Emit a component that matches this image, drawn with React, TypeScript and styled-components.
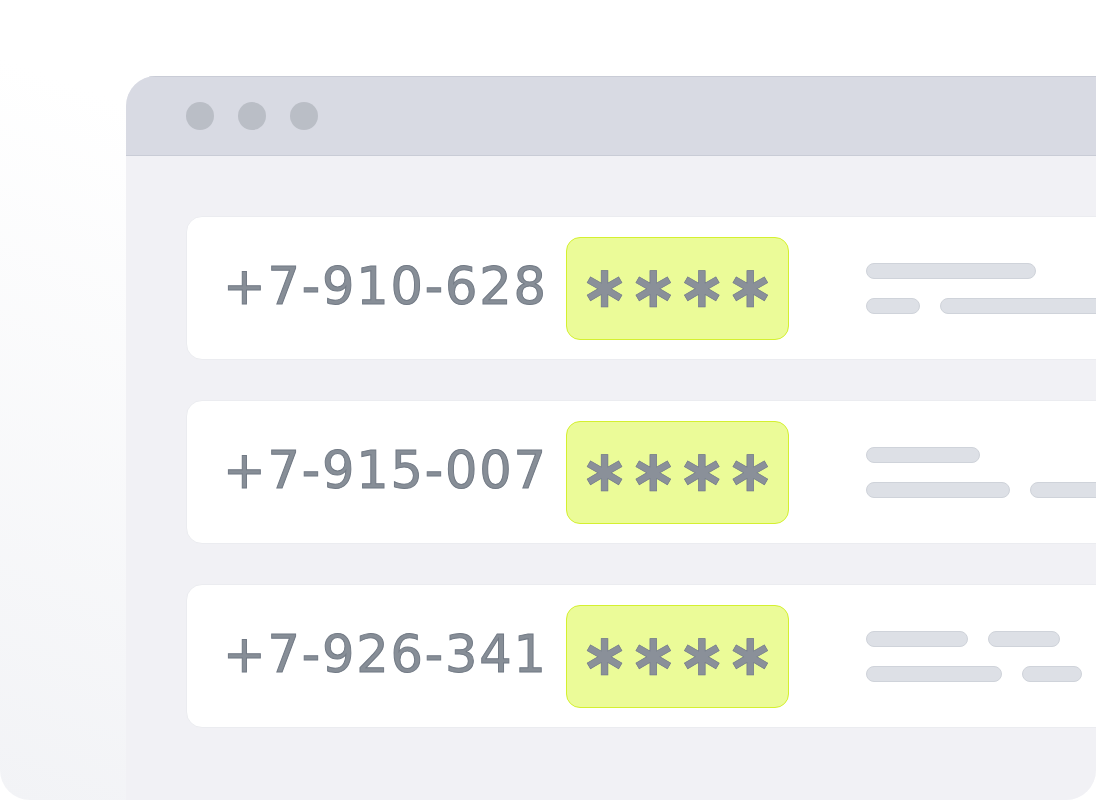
import React from 'react';
import styled, { createGlobalStyle } from 'styled-components';

const GlobalStyle = createGlobalStyle`
  html, body {
    margin: 0;
    padding: 0;
    background: #ffffff;
  }
  body {
    font-family: "DejaVu Sans", "Liberation Sans", sans-serif;
  }
`;

const Stage = styled.div`
  width: 1096px;
  height: 800px;
  box-sizing: border-box;
  padding: 76px 0 0 126px;
  overflow: hidden;
  border-radius: 0 0 30px 30px;
  background: linear-gradient(200deg, #ffffff 38%, #f2f3f6 100%);
`;

const BrowserWindow = styled.div`
  width: 1100px;
  height: 760px;
  background: #f1f1f5;
  border-top-left-radius: 30px;
  overflow: hidden;
`;

const TitleBar = styled.div`
  height: 80px;
  box-sizing: border-box;
  display: flex;
  align-items: center;
  gap: 24px;
  padding-left: 60px;
  background: #d8dae3;
  border-top: 1px solid #c9ccd6;
  border-bottom: 1px solid #c9ccd6;
`;

const Dot = styled.span`
  width: 28px;
  height: 28px;
  border-radius: 50%;
  background: #babec6;
`;

const List = styled.div`
  display: flex;
  flex-direction: column;
  gap: 40px;
  padding: 60px 0 0 60px;
`;

const Row = styled.div`
  display: grid;
  grid-template-columns: 343px 223px 1fr;
  align-items: center;
  width: 1000px;
  height: 144px;
  box-sizing: border-box;
  padding-left: 36px;
  background: #ffffff;
  border: 1px solid #ebecf0;
  border-radius: 16px;
`;

const Phone = styled.span`
  font-family: "DejaVu Sans", sans-serif;
  font-size: 51px;
  letter-spacing: 1.8px;
  color: #878e97;
  -webkit-text-stroke: 1px #727a85;
  line-height: 1;
  margin-top: -4px;
`;

const Code = styled.div`
  height: 103px;
  box-sizing: border-box;
  display: flex;
  align-items: center;
  justify-content: center;
  background: #ebfb98;
  border: 1.5px solid #d4f030;
  border-radius: 14px;
`;

const Mask = styled.span`
  font-family: "DejaVu Sans", sans-serif;
  font-size: 58px;
  font-weight: bold;
  line-height: 1;
  letter-spacing: 0;
  margin-top: -2px;
  color: #8a9099;
  -webkit-text-stroke: 0.6px #6b7289;
`;

const Skeleton = styled.div`
  display: flex;
  flex-direction: column;
  gap: 19px;
  padding-left: 77px;
`;

const SkeletonLine = styled.div`
  display: flex;
  gap: 20px;
`;

const Pill = styled.span<{ $w: number }>`
  width: ${(p) => p.$w}px;
  height: 16px;
  flex-shrink: 0;
  box-sizing: border-box;
  border-radius: 8px;
  background: #dde0e6;
  border: 1px solid #cfd3da;
`;

const rows = [
  { phone: '+7-910-628', lines: [[170], [54, 200]] },
  { phone: '+7-915-007', lines: [[114], [144, 120]] },
  { phone: '+7-926-341', lines: [[102, 72], [136, 60]] },
];

export default function App() {
  return (
    <>
      <GlobalStyle />
      <Stage>
        <BrowserWindow>
          <TitleBar>
            <Dot />
            <Dot />
            <Dot />
          </TitleBar>
          <List>
            {rows.map((r) => (
              <Row key={r.phone}>
                <Phone>{r.phone}</Phone>
                <Code>
                  <Mask>∗∗∗∗</Mask>
                </Code>
                <Skeleton>
                  {r.lines.map((line, i) => (
                    <SkeletonLine key={i}>
                      {line.map((w, j) => (
                        <Pill key={j} $w={w} />
                      ))}
                    </SkeletonLine>
                  ))}
                </Skeleton>
              </Row>
            ))}
          </List>
        </BrowserWindow>
      </Stage>
    </>
  );
}
